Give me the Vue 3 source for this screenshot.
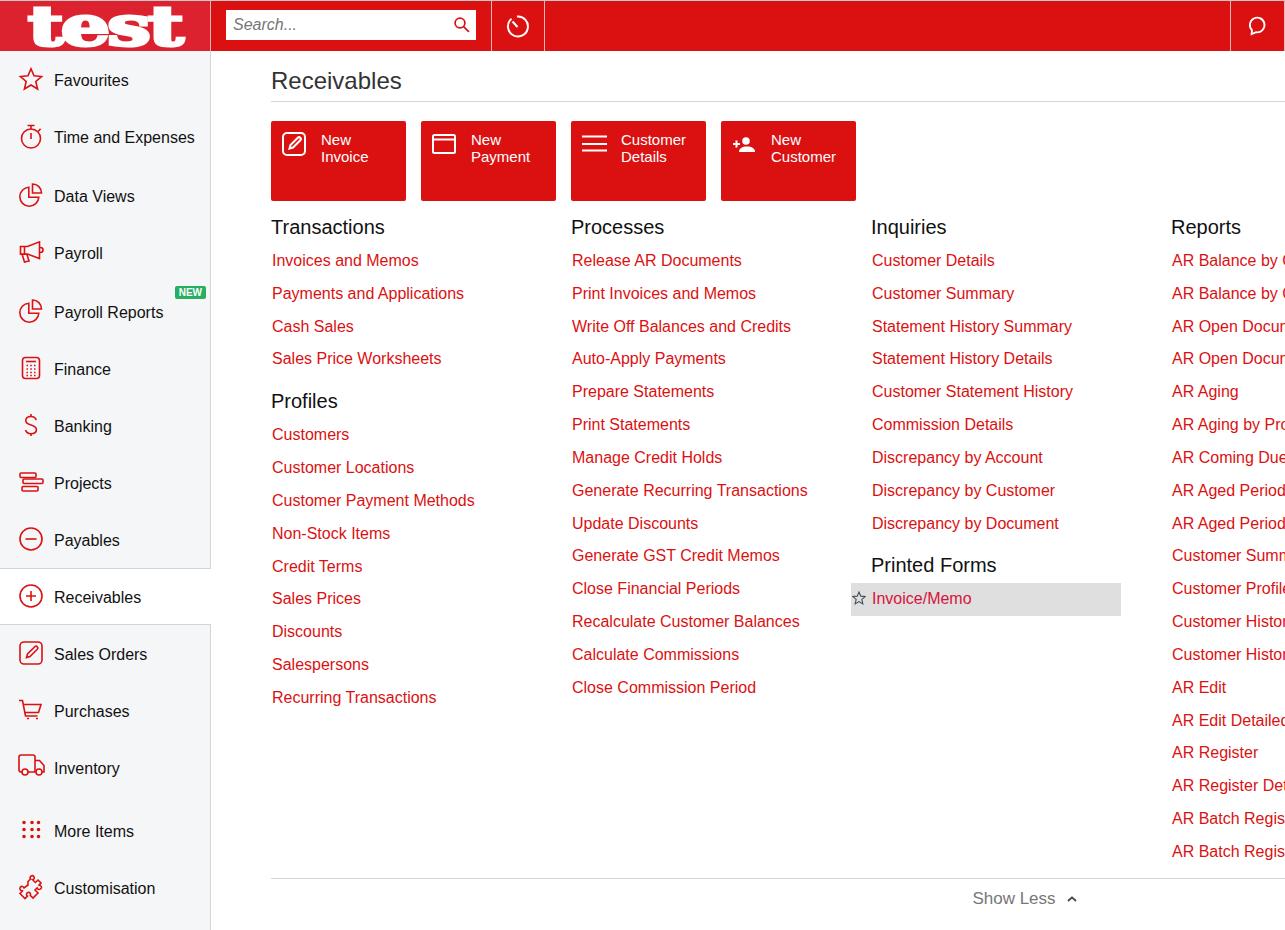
<template>
  <div class="app">
    <header class="topbar">
      <div class="logo"><span>test</span></div>
      <div class="search-cell">
        <div class="search">
          <span class="placeholder">Search...</span>
          <svg class="search-icon" viewBox="0 0 18 18"><circle cx="7" cy="7" r="4.9" /><path d="M10.6 10.6l5.4 5.2" /></svg>
        </div>
      </div>
      <div class="bar-btn history">
        <svg viewBox="0 0 24 24"><path d="M6.500 4.800A10 10 0 1 0 12 2.500" /><path d="M7.500 7.500l5 5.500" /></svg>
      </div>
      <div class="spacer"></div>
      <div class="bar-btn chat">
        <svg viewBox="0 0 18 18"><path d="M4.600 15.600l.3-3.200a6 6 0 1 1 3.400 1.700z" /></svg>
      </div>
    </header>

    <div class="body">
      <nav class="sidebar">
        <a
          v-for="item in nav"
          :key="item.label"
          :class="['nav-item', { active: item.active, spaced: item.spaced, wide: item.wide }]"
        >
          <span class="nav-icon">
            <svg viewBox="0 0 24 24" :class="{ solid: item.icon === 'dots' }">
              <path v-for="d in icons[item.icon]" :key="d" :d="d" />
            </svg>
          </span>
          <span>{{ item.label }}</span>
          <span v-if="item.badge" class="badge">{{ item.badge }}</span>
        </a>
      </nav>

      <main class="content">
        <div class="inner">
          <h1 class="title">Receivables</h1>

          <div class="actions">
            <a v-for="a in actions" :key="a.label" class="action">
              <span class="action-icon">
                <svg viewBox="0 0 24 24" :class="{ solid: a.icon === 'userPlus' }">
                  <path v-for="d in icons[a.icon]" :key="d" :d="d" />
                </svg>
              </span>
              <span class="action-label">{{ a.label }}</span>
            </a>
          </div>

          <div class="columns">
            <div v-for="(col, i) in columns" :key="i" class="column">
              <section v-for="group in col" :key="group.title" class="group">
                <h3>{{ group.title }}</h3>
                <a
                  v-for="link in group.links"
                  :key="link"
                  :class="['link', { hovered: link === 'Invoice/Memo' }]"
                >
                  <svg v-if="link === 'Invoice/Memo'" class="fav" viewBox="0 0 24 24">
                    <path :d="icons.star[0]" />
                  </svg>
                  {{ link }}
                </a>
              </section>
            </div>
          </div>

          <div class="show-less">
            <span>Show Less</span>
            <svg viewBox="0 0 12 8"><path d="M2 6l4-3.600L10 6" /></svg>
          </div>
        </div>
      </main>
    </div>
  </div>
</template>

<script setup>
const icons = {
  star: ['M12 1.800l3 7 7.600.7-5.800 5 1.800 7.500-6.600-4-6.600 4 1.800-7.500-5.800-5 7.600-.7z'],
  timer: [
    'M21.500 14.500a9.500 9.500 0 1 1-19 0 9.500 9.500 0 0 1 19 0z',
    'M8.500 1.500h7M12 1.500v3.500',
    'M12 9v6',
    'M19 7.500l2.600-2.600',
  ],
  pie: ['M9.800 4.200a9.500 9.500 0 1 0 10 10H9.800z', 'M13.500 1a9 9 0 0 1 9 9h-9z'],
  megaphone: [
    'M1.500 6.500h7l12-4.700v16.800l-12-4.500h-7z',
    'M3 14l2.500 8 4.500-1-2-6.500',
    'M5.500 6.500v7.500',
    'M20.500 7.500h1a2 2 0 0 1 0 5h-1',
  ],
  calc: [
    'M6.500 1.500h11a3 3 0 0 1 3 3v15a3 3 0 0 1-3 3h-11a3 3 0 0 1-3-3v-15a3 3 0 0 1 3-3z',
    'M7 5.500h10',
    'M7.500 9.500h1.500M11.200 9.500h1.600M15 9.500h1.500M7.500 13h1.500M11.200 13h1.600M15 13h1.500M7.500 16.500h1.500M11.200 16.500h1.600M15 16.500h1.500M7.500 19.500h1.500M11.200 19.500h1.600M15 19.500h1.500',
  ],
  dollar: [
    'M17.200 7c-.7-2.300-2.700-3.500-5.200-3.500-3 0-5.200 1.500-5.200 4.200 0 5.600 10.600 3 10.600 8.800 0 2.800-2.400 4.200-5.400 4.200-2.700 0-4.800-1.300-5.500-3.700',
    'M12 1v2.500M12 20.700V23',
  ],
  projects: [
    'M2 3h14a1 1 0 0 1 1 1v2.500a1 1 0 0 1-1 1H2a1 1 0 0 1-1-1V4a1 1 0 0 1 1-1z',
    'M5 9h18a1 1 0 0 1 1 1v2.500a1 1 0 0 1-1 1H5a1 1 0 0 1-1-1V10a1 1 0 0 1 1-1z',
    'M4 16.500h14a1 1 0 0 1 1 1V20a1 1 0 0 1-1 1H4a1 1 0 0 1-1-1v-2.500a1 1 0 0 1 1-1z',
  ],
  minus: ['M23 12a11 11 0 1 1-22 0 11 11 0 0 1 22 0z', 'M6.500 12h11'],
  plus: ['M23 12a11 11 0 1 1-22 0 11 11 0 0 1 22 0z', 'M7 12h10M12 7v10'],
  edit: [
    'M5 1h14a4 4 0 0 1 4 4v14a4 4 0 0 1-4 4H5a4 4 0 0 1-4-4V5a4 4 0 0 1 4-4z',
    'M7.500 16.500l1-3.500L15.800 5.700a1.300 1.300 0 0 1 2.500 2.500L11 15.500z',
  ],
  cart: [
    'M0 2.500h3.500L6.500 18h12',
    'M4.500 6.500H22l-2.500 8H6',
    'M8 20.500h2M17 20.500h2',
  ],
  truck: [
    'M3 17H2a2 2 0 0 1-2-2V2a2 2 0 0 1 2-2h12a2 2 0 0 1 2 2v15H9',
    'M16 5.500h4.500l4.500 5v6.500h-2',
    'M9 17a3 3 0 1 1-6 0 3 3 0 0 1 6 0zM23 17a3 3 0 1 1-6 0 3 3 0 0 1 6 0z',
  ],
  dots: [
    'M5 4.500h.01M13 4.500h.01M19.500 4.500h.01',
    'M5 11.500h.01M13 11.500h.01M19.500 11.500h.01',
    'M5 18.500h.01M13 18.500h.01M19.500 18.500h.01',
  ],
  puzzle: [
    'M9 6.500l2.500-2.500c-1.500-2 1.700-4.500 3.300-2.600 1.300 1.500-.2 3.300-1.200 3.300l2.800 2.800 2.600-2.500 3 3-2.500 2.600c1.700-1 3.800 1 2.700 2.800-1 1.600-3.400 1.400-4-.4L16 15l3 3-5 5-2.700-2.700c.8-1.600-.6-3.700-2.500-2.800-1.600.8-1.600 2.800-.4 3.600L6 23.500l-5-5 3-3c-2 .9-4-1.400-2.700-3.200 1.200-1.500 3.300-1 3.800.7L9 10z',
  ],
  card: ['M2.500 3h19a1.500 1.500 0 0 1 1.500 1.500v15a1.500 1.500 0 0 1-1.500 1.500h-19A1.500 1.500 0 0 1 1 19.500v-15A1.500 1.500 0 0 1 2.500 3z', 'M1 7.500h22'],
  lines: ['M0 4.500h25M0 12h25M0 18.500h25'],
  userPlus: [
    'M14 5.200a3.800 3.800 0 1 1 0 7.600 3.800 3.800 0 0 1 0-7.600z',
    'M7 20c0-3.600 3-5.500 8-5.500s8 1.900 8 5.500z',
    'M1 11h7v2H1zM3.500 8.500h2v7h-2z',
  ],
}

const nav = [
  { label: 'Favourites', icon: 'star' },
  { label: 'Time and Expenses', icon: 'timer' },
  { label: 'Data Views', icon: 'pie', spaced: true },
  { label: 'Payroll', icon: 'megaphone' },
  { label: 'Payroll Reports', icon: 'pie', spaced: true, badge: 'NEW' },
  { label: 'Finance', icon: 'calc' },
  { label: 'Banking', icon: 'dollar' },
  { label: 'Projects', icon: 'projects' },
  { label: 'Payables', icon: 'minus' },
  { label: 'Receivables', icon: 'plus', active: true },
  { label: 'Sales Orders', icon: 'edit' },
  { label: 'Purchases', icon: 'cart' },
  { label: 'Inventory', icon: 'truck' },
  { label: 'More Items', icon: 'dots', wide: true },
  { label: 'Customisation', icon: 'puzzle' },
]

const actions = [
  { label: 'New Invoice', icon: 'edit' },
  { label: 'New Payment', icon: 'card' },
  { label: 'Customer Details', icon: 'lines' },
  { label: 'New Customer', icon: 'userPlus' },
]

const columns = [
  [
    {
      title: 'Transactions',
      links: ['Invoices and Memos', 'Payments and Applications', 'Cash Sales', 'Sales Price Worksheets'],
    },
    {
      title: 'Profiles',
      links: [
        'Customers',
        'Customer Locations',
        'Customer Payment Methods',
        'Non-Stock Items',
        'Credit Terms',
        'Sales Prices',
        'Discounts',
        'Salespersons',
        'Recurring Transactions',
      ],
    },
  ],
  [
    {
      title: 'Processes',
      links: [
        'Release AR Documents',
        'Print Invoices and Memos',
        'Write Off Balances and Credits',
        'Auto-Apply Payments',
        'Prepare Statements',
        'Print Statements',
        'Manage Credit Holds',
        'Generate Recurring Transactions',
        'Update Discounts',
        'Generate GST Credit Memos',
        'Close Financial Periods',
        'Recalculate Customer Balances',
        'Calculate Commissions',
        'Close Commission Period',
      ],
    },
  ],
  [
    {
      title: 'Inquiries',
      links: [
        'Customer Details',
        'Customer Summary',
        'Statement History Summary',
        'Statement History Details',
        'Customer Statement History',
        'Commission Details',
        'Discrepancy by Account',
        'Discrepancy by Customer',
        'Discrepancy by Document',
      ],
    },
    { title: 'Printed Forms', links: ['Invoice/Memo'] },
  ],
  [
    {
      title: 'Reports',
      links: [
        'AR Balance by Customer',
        'AR Balance by Customer MTD',
        'AR Open Documents',
        'AR Open Documents by Project',
        'AR Aging',
        'AR Aging by Project',
        'AR Coming Due',
        'AR Aged Period Sales',
        'AR Aged Period Balance',
        'Customer Summary',
        'Customer Profiles',
        'Customer History',
        'Customer History Detailed',
        'AR Edit',
        'AR Edit Detailed',
        'AR Register',
        'AR Register Detailed',
        'AR Batch Register',
        'AR Batch Register Detailed',
      ],
    },
  ],
]
</script>

<style>
html,
body {
  margin: 0;
  overflow: hidden;
}
</style>

<style scoped>
.app {
  height: 930px;
  display: flex;
  flex-direction: column;
  overflow: hidden;
  font-family: "Liberation Sans", Arial, sans-serif;
  font-size: 16px;
  background: #fff;
}
.topbar {
  height: 50px;
  flex: none;
  display: flex;
  border-top: 1px solid #c9c9c9;
  background: #db1111;
}
.logo {
  width: 210px;
  flex: none;
  display: flex;
  justify-content: center;
  background: #dc222e;
  border-right: 1px solid #e9b5b5;
  color: #fff;
  font-family: "DejaVu Serif", serif;
  font-weight: 700;
  font-size: 55px;
  line-height: 49px;
  letter-spacing: -2px;
  -webkit-text-stroke: 3px #fff;
}
.logo span {
  display: inline-block;
  margin-left: -2px;
  transform: scaleX(1.41);
}
.search-cell {
  width: 281px;
  flex: none;
  padding: 9px 0 0 15px;
  box-sizing: border-box;
  border-right: 1px solid #e9b5b5;
}
.search {
  width: 250px;
  height: 30px;
  background: #fff;
  display: flex;
  align-items: center;
  justify-content: space-between;
  padding: 0 5px 0 7px;
  box-sizing: border-box;
}
.placeholder {
  font-style: italic;
  color: #777;
}
.search-icon {
  width: 18px;
  height: 18px;
  fill: none;
  stroke: #db1111;
  stroke-width: 1.7;
}
.bar-btn {
  display: flex;
  align-items: center;
  justify-content: center;
  flex: none;
  border-right: 1px solid #e9b5b5;
}
.history {
  width: 52px;
}
.history svg {
  width: 24px;
  height: 24px;
  margin-right: 2px;
  fill: none;
  stroke: #fff;
  stroke-width: 2;
}
.spacer {
  flex: 1;
}
.chat {
  width: 53px;
  border-left: 1px solid #e9b5b5;
}
.chat svg {
  width: 22px;
  height: 22px;
  margin-right: 2px;
  fill: none;
  stroke: #fff;
  stroke-width: 1.5;
}
.body {
  flex: 1;
  display: flex;
  min-height: 0;
}
.sidebar {
  width: 210px;
  flex: none;
  background: #f5f6f8;
  border-right: 1px solid #d2d4d6;
  padding-top: 1px;
}
.nav-item {
  position: relative;
  height: 57px;
  box-sizing: border-box;
  display: flex;
  align-items: center;
  color: #111;
}
.nav-item.spaced {
  margin-top: 2px;
}
.nav-item.wide {
  margin-top: 6px;
}
.nav-item.active {
  background: #fff;
  margin: -1px -1px 1px 0;
  padding-top: 2px;
  border-top: 1px solid #d2d4d6;
  border-bottom: 1px solid #d2d4d6;
}
.nav-icon {
  width: 24px;
  height: 24px;
  margin: -4px 11px 0 19px;
  flex: none;
}
.nav-icon svg {
  display: block;
  width: 24px;
  height: 24px;
  overflow: visible;
  fill: none;
  stroke: #db1111;
  stroke-width: 1.6;
}
.nav-icon svg.solid {
  stroke-width: 3.6;
  stroke-linecap: round;
}
.badge {
  position: absolute;
  top: 2px;
  right: 4px;
  background: #27ae60;
  color: #fff;
  font-size: 10px;
  font-weight: 700;
  line-height: 13px;
  padding: 0 4px;
  border-radius: 2px;
}
.content {
  flex: 1;
  min-width: 0;
  overflow: hidden;
  padding-left: 60px;
}
.inner {
  width: 1508px;
}
.title {
  margin: 0;
  height: 50px;
  line-height: 60px;
  font-size: 24px;
  font-weight: 400;
  color: #333;
  border-bottom: 1px solid #d5d5d5;
}
.actions {
  display: flex;
  gap: 15px;
  margin-top: 19px;
}
.action {
  width: 135px;
  height: 80px;
  box-sizing: border-box;
  padding: 11px;
  display: flex;
  background: #db1111;
  color: #fff;
  font-size: 15px;
  line-height: 17px;
  border-radius: 2px;
}
.action-icon {
  width: 39px;
  flex: none;
}
.action-icon svg {
  display: block;
  width: 24px;
  height: 24px;
  overflow: visible;
  fill: none;
  stroke: #fff;
  stroke-width: 2;
}
.action-icon svg.solid {
  fill: #fff;
  stroke: none;
}
.action-label {
  width: 70px;
  margin-top: -1px;
}
.columns {
  display: flex;
  margin-top: 10px;
}
.column {
  width: 300px;
  flex: none;
}
.group + .group {
  margin-top: 9.3px;
}
.group h3 {
  margin: 0;
  height: 33.6px;
  line-height: 33px;
  font-size: 20px;
  font-weight: 400;
  color: #111;
}
.link {
  display: flex;
  align-items: center;
  width: 270px;
  height: 32.84px;
  box-sizing: border-box;
  margin-left: -20px;
  padding-left: 21px;
  color: #db1111;
  white-space: nowrap;
  position: relative;
}
.link.hovered {
  background: #dfdfdf;
  color: #d8123c;
}
.fav {
  position: absolute;
  left: 1px;
  top: 8px;
  width: 14px;
  height: 14px;
  fill: none;
  stroke: #3e4a59;
  stroke-width: 1.8;
}
.show-less {
  margin-top: 9.4px;
  height: 40px;
  border-top: 1px solid #d5d5d5;
  display: flex;
  align-items: center;
  justify-content: center;
  gap: 10px;
  font-size: 17px;
  color: #777;
}
.show-less svg {
  width: 12px;
  height: 8px;
  fill: none;
  stroke: #444;
  stroke-width: 1.8;
}
</style>
